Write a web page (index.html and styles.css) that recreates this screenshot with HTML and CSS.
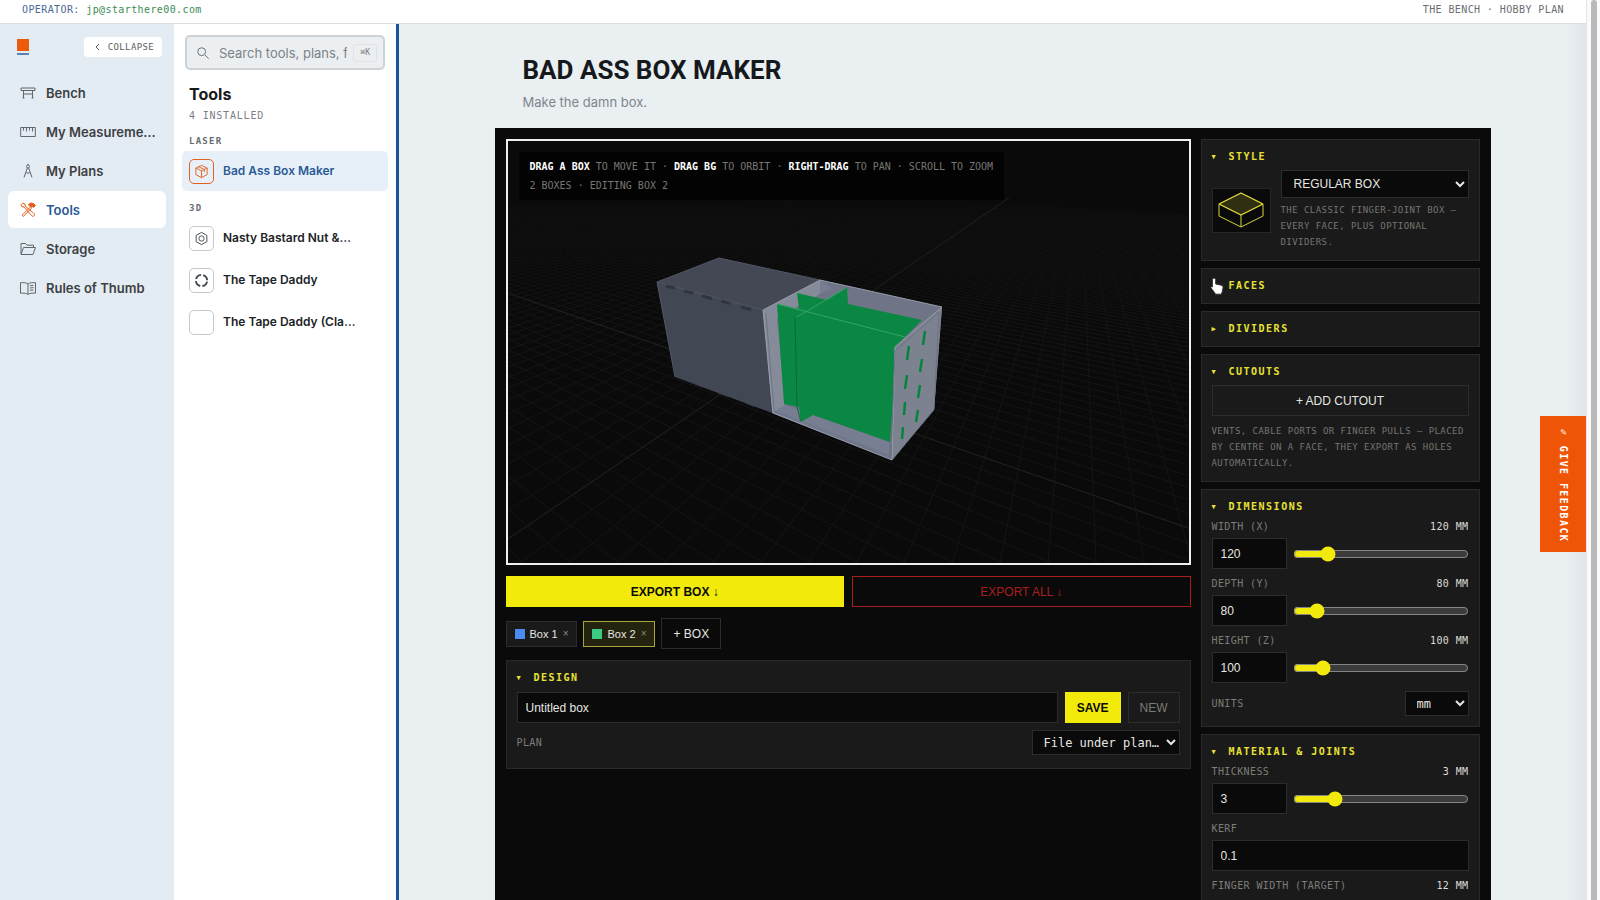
FILE: index.html
```html
<!DOCTYPE html>
<html lang="en">
<head>
<meta charset="utf-8">
<title>Bad Ass Box Maker</title>
<link rel="stylesheet" href="styles.css">
</head>
<body>
<div class="app">
  <header class="topbar">
    <p class="operator">OPERATOR: <span class="email">jp@starthere00.com</span></p>
    <p class="plan-name">THE BENCH · HOBBY PLAN</p>
  </header>

  <div class="shell">
    <nav class="sidebar" aria-label="Main">
      <div class="brand-row">
        <span class="logo"></span>
        <button class="collapse" type="button"><svg width="5" height="8" viewBox="0 0 5 8"><path d="M4 1L1 4l3 3"/></svg>COLLAPSE</button>
      </div>
      <a class="nav-item" href="#bench"><svg class="icon" viewBox="0 0 16 16"><path d="M1 3h14M1 5.500h14M1 3v2.500M15 3v2.500M3.500 5.500V13M12.500 5.500V13M3.500 9h9M2.500 13h2M11.500 13h2"/></svg><span>Bench</span></a>
      <a class="nav-item" href="#measurements"><svg class="icon" viewBox="0 0 16 16"><path d="M.7 3.500h14.600v9H.7zM3.500 3.500v3M6.500 3.500v4M9.500 3.500v3M12.500 3.500v4"/></svg><span>My Measureme…</span></a>
      <a class="nav-item" href="#plans"><svg class="icon" viewBox="0 0 16 16"><circle cx="8" cy="3.500" r="1.500"/><path d="M8 .8V2M7.300 5L4 14.500M8.700 5L12 14.500M6.200 9.500c1 .8 2.600.8 3.600 0"/></svg><span>My Plans</span></a>
      <a class="nav-item active" href="#tools"><svg class="icon" viewBox="0 0 16 16"><path class="solid" d="M8.500 2.500c2-1.800 4-1.800 5.500-.5l1.500 1.500-2 2-1.300-1-1.200 1-1.500-1.600z"/><path d="M10.500 5L2 13.200l1.200 1.300 8.500-8.300M2.500 1.200L1 2.700l.8 2L4 5l7.500 8.500c1 1.400 3 .8 3-.8 0-.8-.5-1.200-1-1.700L5.200 4.200 5 2z"/></svg><span>Tools</span></a>
      <a class="nav-item" href="#storage"><svg class="icon" viewBox="0 0 16 16"><path d="M1 13V2.500h4.500L7 4.200h6.500v2.300M1 13.500L3.500 6.500h12L13 13.500z"/></svg><span>Storage</span></a>
      <a class="nav-item" href="#rules"><svg class="icon" viewBox="0 0 16 16"><path d="M8 4C6.500 2.700 3.500 2.400.5 2.700v10.500c3-.3 6 0 7.500 1.200 1.500-1.200 4.500-1.500 7.500-1.200V2.700C12.500 2.400 9.500 2.700 8 4zM8 4v10.400M10 5.700l3.500-.4M10 8l3.500-.4M10 10.300l3.500-.4"/></svg><span>Rules of Thumb</span></a>
    </nav>

    <aside class="tool-list">
      <label class="search">
        <svg class="search-icon" viewBox="0 0 16 16"><circle cx="6.500" cy="6.500" r="4.500"/><path d="M10 10l4.500 4.500"/></svg>
        <input type="text" placeholder="Search tools, plans, files…" aria-label="Search tools, plans, files">
        <kbd>⌘K</kbd>
      </label>
      <h2>Tools</h2>
      <p class="count">4 INSTALLED</p>
      <h3>LASER</h3>
      <a class="tool active" href="#box"><span class="tile"><svg viewBox="0 0 16 16"><path d="M8 1.500l6 2.800v7L8 14.500l-6-3.200v-7zM2 4.300l6 3 6-3M8 7.300v7.200M5 2.900l6 3v2.500"/></svg></span><span>Bad Ass Box Maker</span></a>
      <h3>3D</h3>
      <a class="tool" href="#nut"><span class="tile"><svg viewBox="0 0 16 16"><path d="M8 1.500l5.700 3.200v6.600L8 14.500l-5.700-3.200V4.700z"/><circle cx="8" cy="8" r="2.800"/></svg></span><span>Nasty Bastard Nut &amp;…</span></a>
      <a class="tool" href="#tape"><span class="tile"><svg viewBox="0 0 16 16"><circle class="dashes" cx="8" cy="8" r="6"/></svg></span><span>The Tape Daddy</span></a>
      <a class="tool" href="#tape-classic"><span class="tile"></span><span>The Tape Daddy (Cla…</span></a>
    </aside>

    <main class="main">
      <div class="page-head">
        <h1>BAD ASS BOX MAKER</h1>
        <p>Make the damn box.</p>
      </div>

      <div class="workspace">
        <div class="stage">
          <div class="viewport">
            <svg class="scene" viewBox="508 141 681 422" preserveAspectRatio="xMidYMid slice">
              <defs>
                <linearGradient id="fade" x1="0" y1="190" x2="0" y2="330" gradientUnits="userSpaceOnUse"><stop offset="0" stop-color="#000"/><stop offset=".15" stop-color="#555"/><stop offset="1" stop-color="#fff"/></linearGradient>
                <mask id="floor"><path d="M508 205L1008 196l180 15v352H508z" fill="url(#fade)"/></mask>
              </defs>
              <path id="grid" mask="url(#floor)" fill="none" stroke="#151515"/>
              <path d="M1009 198L508 539M508 293l680 235" stroke="#202020" fill="none"/>
              <path d="M657 282l62-24 101 22-57 30z" fill="#444854"/>
              <path d="M657 282l106 28 9 103-97-36z" fill="#424853"/>
              <path d="M675 377l-18-95 62-24 101 22M657 282l106 28" fill="none" stroke="#505665"/>
              <path d="M666 286l9 2M684 291l9 2M702 296l10 2.500M721 301l9 2.500M741 307l10 2.500" stroke="#303541" stroke-width="3"/>
              <path d="M690 382l12 5M718 393l11 4M745 403l10 4" stroke="#343945"/>
              <path d="M763 310l57-30 122 27-8 103-42 50-120-47z" fill="#6f7586"/>
              <path d="M763 310l57-30v14l-43 24 8 87-12 8z" fill="#858b99"/>
              <path d="M820 280v14l12-6M785 405l-12 8 116 43v-14z" fill="#777e92"/>
              <path d="M777 304l22 5-2-16 30 7 20-13 1 17 74 16-25 25-7 97-77-27-12 7-2-15-15-3z" fill="#0b8744"/>
              <path d="M777 304l128 33M846 288l-49 29" stroke="#35a565" fill="none"/>
              <path d="M795 318l2 89 4 15" stroke="#096a39" fill="none"/>
              <path d="M895 347l47-40-8 103-42 50z" fill="#7d8290"/>
              <path d="M763 310l57-30 122 27-47 40-3 113-119-47z" fill="none" stroke="#969cab"/>
              <path d="M766 313l8 98 117 45 4-105 44-39-5 97-42 51" fill="none" stroke="#6c7485"/>
              <path d="M909 346l-2 14M907 375l-2 14M905 402l-1 13M903 427l-1 12M925 331l-2 14M922 359l-2 13M920 385l-2 13M918 410l-2 12" stroke="#07843c" stroke-width="2.500"/>
            </svg>
            <div class="hint">
              <p><b>DRAG A BOX</b> TO MOVE IT · <b>DRAG BG</b> TO ORBIT · <b>RIGHT-DRAG</b> TO PAN · SCROLL TO ZOOM</p>
              <p>2 BOXES · EDITING BOX 2</p>
            </div>
          </div>

          <div class="exports">
            <button class="btn primary" type="button">EXPORT BOX ↓</button>
            <button class="btn danger" type="button">EXPORT ALL ↓</button>
          </div>

          <div class="chips">
            <button class="chip" type="button"><i class="swatch blue"></i>Box 1<span class="close">×</span></button>
            <button class="chip selected" type="button"><i class="swatch green"></i>Box 2<span class="close">×</span></button>
            <button class="btn" type="button">+ BOX</button>
          </div>

          <section class="panel">
            <h4><span class="caret">▼</span>DESIGN</h4>
            <div class="save-row">
              <input class="field" type="text" value="Untitled box" aria-label="Design name">
              <button class="btn primary" type="button">SAVE</button>
              <button class="btn muted" type="button">NEW</button>
            </div>
            <div class="inline-row">
              <label for="plan">PLAN</label>
              <select id="plan" class="select mono wide"><option>File under plan…</option></select>
            </div>
          </section>
        </div>

        <div class="controls">
          <section class="panel">
            <h4><span class="caret">▼</span>STYLE</h4>
            <div class="style-row">
              <div class="thumb"><svg viewBox="0 0 46 36"><path d="M1 12L23 1l22 11-22 11z" fill="#302f12"/><path d="M1 12L23 1l22 11-22 11zM1 12v12l22 11 22-11V12M23 23v12"/></svg></div>
              <div class="style-info">
                <select class="select" aria-label="Box style"><option>REGULAR BOX</option></select>
                <p class="note">THE CLASSIC FINGER-JOINT BOX — EVERY FACE, PLUS OPTIONAL DIVIDERS.</p>
              </div>
            </div>
          </section>

          <section class="panel closed">
            <h4><span class="caret"></span>FACES</h4>
            <svg class="pointer" viewBox="0 0 14 18"><path d="M4 1.200c1.400 0 1.700.8 1.700 1.800v4l5.500 1.200c1.500.4 2 1.300 1.800 2.700l-.8 4c-.2.800-.8 1.800-1 2.300H5.500C4.800 15.500 2.500 13 1 10.800c-.6-1 .6-1.600 1.400-.8V3c0-1 .3-1.800 1.600-1.800z"/></svg>
          </section>

          <section class="panel closed">
            <h4><span class="caret">▶</span>DIVIDERS</h4>
          </section>

          <section class="panel">
            <h4><span class="caret">▼</span>CUTOUTS</h4>
            <button class="btn block" type="button">+ ADD CUTOUT</button>
            <p class="note">VENTS, CABLE PORTS OR FINGER PULLS — PLACED BY CENTRE ON A FACE, THEY EXPORT AS HOLES AUTOMATICALLY.</p>
          </section>

          <section class="panel">
            <h4><span class="caret">▼</span>DIMENSIONS</h4>
            <div class="param">
              <div class="param-head"><label for="w">WIDTH (X)</label><output>120 MM</output></div>
              <div class="param-row"><input id="w" class="field" type="text" value="120"><input type="range" min="20" max="600" value="120" aria-label="Width"></div>
            </div>
            <div class="param">
              <div class="param-head"><label for="d">DEPTH (Y)</label><output>80 MM</output></div>
              <div class="param-row"><input id="d" class="field" type="text" value="80"><input type="range" min="20" max="600" value="80" aria-label="Depth"></div>
            </div>
            <div class="param">
              <div class="param-head"><label for="h">HEIGHT (Z)</label><output>100 MM</output></div>
              <div class="param-row"><input id="h" class="field" type="text" value="100"><input type="range" min="20" max="600" value="100" aria-label="Height"></div>
            </div>
            <div class="inline-row">
              <label for="units">UNITS</label>
              <select id="units" class="select mono"><option>mm</option></select>
            </div>
          </section>

          <section class="panel">
            <h4><span class="caret">▼</span>MATERIAL &amp; JOINTS</h4>
            <div class="param">
              <div class="param-head"><label for="t">THICKNESS</label><output>3 MM</output></div>
              <div class="param-row"><input id="t" class="field" type="text" value="3"><input type="range" min="0.5" max="12" step="0.5" value="3" aria-label="Thickness"></div>
            </div>
            <div class="param">
              <div class="param-head"><label for="k">KERF</label></div>
              <input id="k" class="field" type="text" value="0.1">
            </div>
            <div class="param-head"><span>FINGER WIDTH (TARGET)</span><output>12 MM</output></div>
          </section>
        </div>
      </div>
      <button class="feedback" type="button"><span>✎</span> GIVE FEEDBACK</button>
    </main>
  </div>
</div>
<div class="scrollbar"><div class="scroll-thumb"></div></div>
<script src="scene.js"></script>
</body>
</html>
```

FILE: styles.css
```css
* { box-sizing: border-box; }

:root {
  --sans: Inter, "Liberation Sans", sans-serif;
  --panel-sans: "Liberation Sans", Arial, sans-serif;
  --mono: "DejaVu Sans Mono", "Liberation Mono", monospace;
  --yellow: #f2ea0a;
  --line: #2c2c2c;
  --ink: #0a0a0a;
}

body {
  margin: 0;
  height: 100vh;
  display: flex;
  overflow: hidden;
  font: 13px/16px var(--sans);
  background: #fff;
}

h1, h2, h3, h4, p { margin: 0; }
button, input, select { font: inherit; margin: 0; }
a { text-decoration: none; color: inherit; }
svg { display: block; fill: none; stroke: currentColor; }

.app { flex: 1; min-width: 0; display: flex; flex-direction: column; }

.topbar {
  flex: none;
  display: flex;
  justify-content: space-between;
  height: 24px;
  padding: 2px 22px;
  border-bottom: 1px solid #dcdfe2;
  font: 10px/16px var(--mono);
  letter-spacing: 0.04em;
}
.operator { color: #4a6a96; }
.email { color: #3d8a52; }
.plan-name { color: #6a6e72; }

.shell { flex: 1; min-height: 0; display: flex; }

/* Primary navigation */
.sidebar {
  flex: none;
  width: 174px;
  padding: 12px 8px;
  display: flex;
  flex-direction: column;
  gap: 2px;
  background: #e4ecf3;
}
.brand-row {
  display: flex;
  align-items: center;
  justify-content: space-between;
  padding: 0 4px 0 9px;
  height: 22px;
  margin-bottom: 14px;
}
.logo { width: 12px; height: 16px; border-bottom: 2px solid #5c80b4; background: linear-gradient(#ec5a0c 12px, transparent 12px); }
.collapse {
  display: flex;
  align-items: center;
  gap: 8px;
  height: 20px;
  padding: 0 8px 0 11px;
  border: 0;
  border-radius: 4px;
  background: #fff;
  color: #5a5e63;
  font: 9px/12px var(--mono);
  letter-spacing: 0.04em;
}
.nav-item {
  display: flex;
  align-items: center;
  gap: 10px;
  height: 37px;
  padding: 0 8px 0 12px;
  border-radius: 6px;
  color: #3d4043;
  font-weight: 600;
  white-space: nowrap;
}
.icon { flex: none; width: 16px; height: 16px; color: #5f666c; }
.nav-item.active { background: #fff; color: #2b5a96; }
.nav-item.active .icon { color: #e2611f; }
.solid { fill: currentColor; }

/* Tool list */
.tool-list {
  flex: none;
  width: 225px;
  padding: 11px 8px;
  border-right: 3px solid #1c5394;
  background: #fff;
}
.search {
  display: flex;
  align-items: center;
  height: 35px;
  margin: 0 3px;
  padding: 0 6px 0 9px;
  border: 2px solid #ccd2d6;
  border-radius: 5px;
  background: #ebeff2;
}
.search-icon { flex: none; width: 14px; height: 14px; color: #5f656a; margin-right: 9px; }
.search input {
  flex: 1;
  min-width: 0;
  padding: 0;
  border: 0;
  outline: 0;
  background: none;
}
.search input::placeholder { color: #7c8287; }
.search kbd {
  margin-left: 6px;
  padding: 0 6px;
  border: 1px solid #dfe3e6;
  border-radius: 3px;
  font: 8px/16px var(--mono);
  color: #777c80;
}
.tool-list h2 { margin: 14px 7px 0; font-size: 16px; line-height: 20px; color: #17191b; }
.count, .tool-list h3 { margin: 4px 7px 0; font: 10px/16px var(--mono); letter-spacing: 0.08em; color: #7c8084; }
.tool-list h3 { margin: 9px 7px 2px; font-size: 9px; font-weight: 700; letter-spacing: 0.14em; color: #686c70; }
.tool {
  display: flex;
  align-items: center;
  gap: 9px;
  height: 40px;
  margin-bottom: 2px;
  padding: 0 7px;
  border-radius: 5px;
  color: #202326;
  font-size: 12px;
  font-weight: 600;
  white-space: nowrap;
}
.tool.active { margin-bottom: 8px; background: #e7f0f9; color: #2b5a96; }
.tile {
  flex: none;
  display: grid;
  place-items: center;
  width: 25px;
  height: 25px;
  border: 1px solid #c3c9ce;
  border-radius: 5px;
  color: #3f464c;
}
.tile svg { width: 15px; height: 15px; }
.tool.active .tile { border-color: #e2611f; color: #e2611f; }
.dashes { stroke-width: 2; stroke-dasharray: 7 2.400; stroke-dashoffset: 8.200; }

/* Page */
.main {
  flex: 1;
  min-width: 0;
  position: relative;
  overflow: hidden;
  background: linear-gradient(to left, #e2e6ea, #eaeff2 20px);
  padding: 30px 40px 0;
}
.page-head { max-width: 940px; margin: 0 auto 18px; }
h1 { font: 700 26px/32px Roboto, sans-serif; color: #15191c; }
.page-head p { margin-top: 8px; color: #7f858a; }

.workspace {
  max-width: 996px;
  min-height: 100%;
  margin: 0 auto;
  padding: 11px;
  display: grid;
  grid-template-columns: minmax(0, 1fr) 279px;
  gap: 10px;
  background: var(--ink);
  color: #e6e6e2;
  color-scheme: dark;
  font: 12px/16px var(--panel-sans);
}
.stage { display: flex; flex-direction: column; gap: 11px; }
.viewport { position: relative; border: 2px solid #eef0ec; }
.scene { width: 100%; aspect-ratio: 681 / 422; stroke: none; }
.hint {
  position: absolute;
  top: 11px;
  left: 11px;
  padding: 5px 11px;
  background: rgba(0, 0, 0, 0.7);
  color: #777773;
  font: 10px/19px var(--mono);
}
.hint b { color: #fff; }

.btn {
  height: 31px;
  padding: 0 11px;
  border: 1px solid var(--line);
  background: var(--ink);
  color: #e6e6e2;
}
.btn.primary { border-color: var(--yellow); background: var(--yellow); color: #0a0a0a; font-weight: 700; }
.btn.danger { border-color: #a81e1e; color: #a81e1e; }
.btn.muted { background: #1a1a1a; color: #7a7a77; }
.btn.block { width: 100%; background: #1a1a1a; }
.exports { display: grid; grid-template-columns: 1fr 1fr; gap: 8px; }

.chips { display: flex; align-items: center; gap: 6px; }
.chip {
  display: flex;
  align-items: center;
  gap: 5px;
  height: 26px;
  padding: 0 8px;
  border: 1px solid var(--line);
  background: #1a1a1a;
  color: #e6e6e2;
  font-size: 11px;
}
.chip.selected { border-color: #a9a53a; background: #24230f; }
.swatch { width: 10px; height: 10px; }
.blue { background: #4b8bf0; }
.green { background: #3ccb82; }
.close { color: #8a8a86; font-size: 10px; }

.controls { display: flex; flex-direction: column; gap: 7px; }
.panel { position: relative; padding: 10px; border: 1px solid #2a2a2a; background: #1a1a1a; }
.panel h4 {
  display: flex;
  margin-bottom: 6px;
  font: 700 10px/14px var(--mono);
  letter-spacing: 0.15em;
  color: #e8e234;
}
.stage .panel h4 { margin-bottom: 7px; }
.panel.closed h4 { margin: 0; }
.caret { width: 17px; font-size: 7px; }
.pointer { position: absolute; left: 8px; top: 8px; width: 14px; height: 18px; fill: #fff; stroke: #333; }

.field {
  width: 100%;
  height: 31px;
  padding: 0 8px;
  border: 1px solid var(--line);
  border-radius: 0;
  background: var(--ink);
  color: #e6e6e2;
}
.select {
  height: 28px;
  padding: 0 0 0 8px;
  border: 1px solid var(--line);
  border-radius: 0;
  background: var(--ink);
  color: #e6e6e2;
}
.select.mono { width: 64px; height: 25px; padding-left: 7px; font-family: var(--mono); }
.select.wide { width: 148px; }

.save-row { display: flex; gap: 7px; margin-bottom: 7px; }
.save-row .field { flex: 1; }
.inline-row { display: flex; align-items: center; justify-content: space-between; }
.inline-row label, .param-head { color: #7d7d79; font: 10px/14px var(--mono); letter-spacing: 0.04em; }
.save-row + .inline-row { margin-bottom: 3px; }

.style-row { display: flex; align-items: center; gap: 10px; }
.thumb { flex: none; display: grid; place-items: center; width: 59px; height: 45px; border: 1px solid #262626; background: var(--ink); color: #d9d43c; }
.thumb svg { width: 46px; height: 36px; }
.style-info { flex: 1; }
.style-info .select { display: block; width: 100%; margin-bottom: 4px; }
.note { font: 9px/16px var(--mono); letter-spacing: 0.05em; color: #757571; }
.block { display: block; }
.block + .note { margin-top: 7px; }

.param { margin-bottom: 8px; }
.param-head { display: flex; justify-content: space-between; }
.param-head output { color: #dcdcd8; }
.param-row { display: flex; align-items: center; gap: 6px; }
.param .field { display: block; margin-top: 4px; }
.param-row .field { flex: none; width: 75px; }
.param-row input[type="range"] { flex: 1; min-width: 0; height: 16px; margin-top: 4px; accent-color: var(--yellow); }

.feedback {
  position: absolute;
  right: 0;
  top: 392px;
  width: 46px;
  height: 136px;
  padding: 0;
  border: 0;
  background: #ee5506;
  color: #fff;
  writing-mode: vertical-rl;
  font: 700 10px/16px var(--mono);
  letter-spacing: 0.14em;
}

.scrollbar { flex: none; width: 14px; padding: 0 3px 0 4px; border-left: 1px solid #e4e4e6; background: #fafafa; }
.scroll-thumb { height: 100%; border-radius: 4px 4px 0 0; background: #b9b9bb; }
```

FILE: scene.js
```js
// Floor grid: two fans of lines, each running to its own vanishing point.
const horizon = 150;
const floorY = 563;
const step = 48;
let d = "";
for (let i = -70; i <= 26; i++) {
  d += `M1080 ${horizon}L${472 + i * step} ${floorY}`;
}
for (let i = -18; i <= 120; i++) {
  d += `M90 ${horizon}L${1291 + i * step} ${floorY}`;
}
document.getElementById("grid").setAttribute("d", d);
```
